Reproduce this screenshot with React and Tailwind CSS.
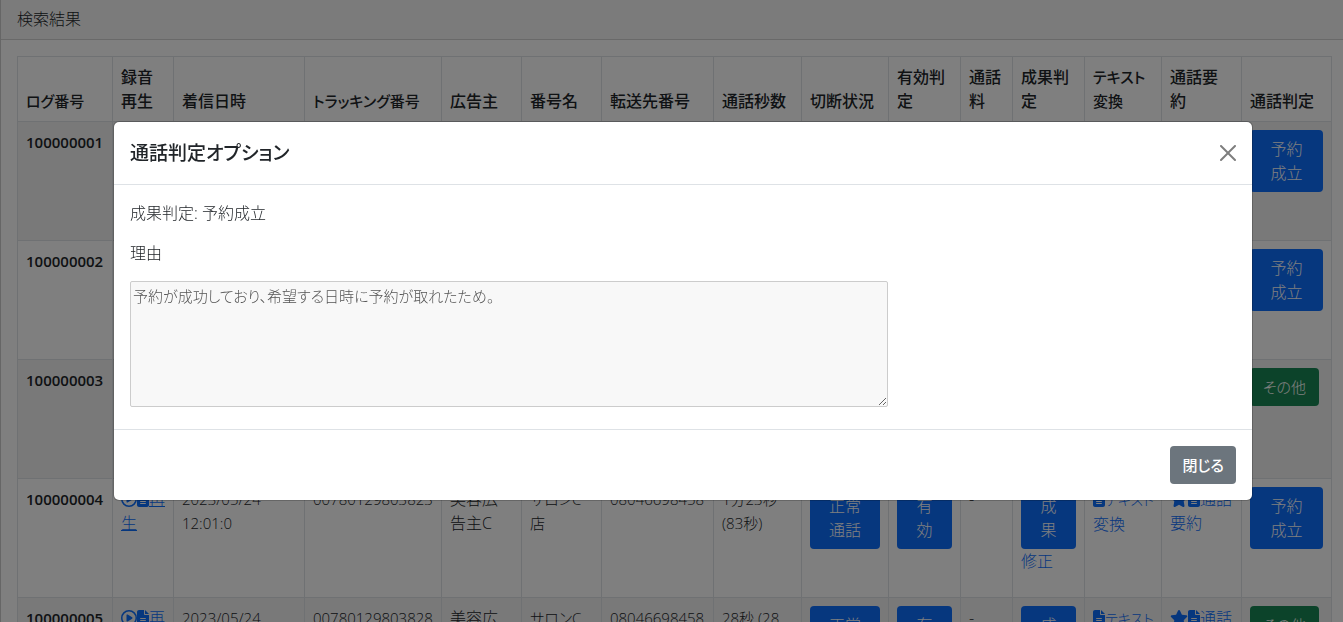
import React, { useState } from "react";
import { FaFileLines, FaRegCirclePlay, FaStar } from "react-icons/fa6";

const columns = [
  { label: "ログ番号", width: "w-[95px]", size: "text-[15px]" },
  { label: "録音再生", width: "w-[61px]" },
  { label: "着信日時", width: "w-[131px]" },
  { label: "トラッキング番号", width: "w-[137px]", size: "text-[15px]" },
  { label: "広告主", width: "w-[80px]" },
  { label: "番号名", width: "w-[80px]" },
  { label: "転送先番号", width: "w-[112px]" },
  { label: "通話秒数", width: "w-[88px]" },
  { label: "切断状況", width: "w-[87px]" },
  { label: "有効判定", width: "w-[72px]" },
  { label: "通話料", width: "w-[52px]" },
  { label: "成果判定", width: "w-[72px]" },
  { label: "テキスト変換", width: "w-[77px]", size: "text-[15px]" },
  { label: "通話要約", width: "w-[80px]" },
  { label: "通話判定", width: "w-[90px]" },
];

const calls = [
  {
    id: "100000001",
    calledAt: "2023/05/24 12:10:0",
    tracking: "00780129803821",
    advertiser: "美容広告主A",
    shop: "サロンA店",
    forwardTo: "08046698458",
    duration: "2分10秒 (130秒)",
    result: "予約成立",
  },
  {
    id: "100000002",
    calledAt: "2023/05/24 12:05:0",
    tracking: "00780129803822",
    advertiser: "美容広告主B",
    shop: "サロンB店",
    forwardTo: "08046698458",
    duration: "1分45秒 (105秒)",
    result: "予約成立",
  },
  {
    id: "100000003",
    calledAt: "2023/05/24 12:03:0",
    tracking: "00780129803828",
    advertiser: "美容広告主C",
    shop: "サロンC店",
    forwardTo: "08046698458",
    duration: "35秒 (35秒)",
    result: "その他",
  },
  {
    id: "100000004",
    calledAt: "2023/05/24 12:01:0",
    tracking: "00780129803823",
    advertiser: "美容広告主C",
    shop: "サロンC店",
    forwardTo: "08046698458",
    duration: "1分23秒 (83秒)",
    result: "予約成立",
  },
  {
    id: "100000005",
    calledAt: "2023/05/24 11:58:0",
    tracking: "00780129803828",
    advertiser: "美容広告主C",
    shop: "サロンC店",
    forwardTo: "08046698458",
    duration: "28秒 (28秒)",
    result: "その他",
  },
];

const Badge = ({
  children,
  color = "bg-[#0d6efd]",
  size = "text-base",
  onClick,
}) => (
  <button
    type="button"
    onClick={onClick}
    className={`${color} ${size} block rounded px-[13px] py-[7px] text-center leading-6 text-white`}
  >
    {children}
  </button>
);

const CallRow = ({ call, onOpen }) => {
  const cell = "border border-[#dee2e6] p-2 leading-6";
  const isOther = call.result === "その他";

  return (
    <tr className="h-[119px] align-top odd:bg-black/5">
      <th scope="row" className={`${cell} text-left text-[15px] font-semibold`}>
        {call.id}
      </th>
      <td className={cell}>
        <a href="#play" className="text-[#0d6efd] underline">
          <FaRegCirclePlay className="inline align-[-2px]" />
          <FaFileLines className="inline w-3 align-[-2px]" />
          再生
        </a>
      </td>
      <td className={`${cell} text-[15px]`}>{call.calledAt}</td>
      <td className={`${cell} text-[15px]`}>{call.tracking}</td>
      <td className={cell}>{call.advertiser}</td>
      <td className={`${cell} text-[15px]`}>{call.shop}</td>
      <td className={`${cell} text-[15px]`}>{call.forwardTo}</td>
      <td className={`${cell} text-[15px]`}>{call.duration}</td>
      <td className={cell}>
        <Badge>正常通話</Badge>
      </td>
      <td className={cell}>
        <Badge>有効</Badge>
      </td>
      <td className={cell}>-</td>
      <td className={cell}>
        <Badge>成果</Badge>
        <a href="#edit" className="text-[#0d6efd]">
          修正
        </a>
      </td>
      <td className={cell}>
        <a href="#text" className="text-[#0d6efd]">
          <span className="text-sm leading-6 whitespace-nowrap">
            <FaFileLines className="inline h-4 w-3 align-[-2px]" />
            テキスト
          </span>
          変換
        </a>
      </td>
      <td className={cell}>
        <a href="#summary" className="text-[#0d6efd]">
          <FaStar className="inline w-[18px] align-[-2px]" />
          <FaFileLines className="inline w-3 align-[-2px]" />
          通話要約
        </a>
      </td>
      <td className={cell}>
        <Badge
          color={isOther ? "bg-[#198754]" : "bg-[#0d6efd]"}
          size={isOther ? "text-[15px]" : "text-base"}
          onClick={onOpen}
        >
          {call.result}
        </Badge>
      </td>
    </tr>
  );
};

const OptionModal = ({ onClose }) => (
  <div className="fixed inset-0 flex items-center justify-center bg-black/50 pl-[23px]">
    <div
      role="dialog"
      aria-modal="true"
      aria-labelledby="modal-title"
      className="w-full max-w-[1140px] rounded-md border border-black/20 bg-white bg-clip-padding"
    >
      <div className="flex items-center justify-between border-b border-[#dee2e6] p-4">
        <h5 id="modal-title" className="text-[19px] leading-[30px] font-medium">
          通話判定オプション
        </h5>
        <button
          type="button"
          aria-label="閉じる"
          onClick={onClose}
          className="opacity-50"
        >
          <svg viewBox="0 0 16 16" className="size-4 fill-black">
            <path d="M.293.293a1 1 0 0 1 1.414 0L8 6.586 14.293.293a1 1 0 1 1 1.414 1.414L9.414 8l6.293 6.293a1 1 0 0 1-1.414 1.414L8 9.414l-6.293 6.293a1 1 0 0 1-1.414-1.414L6.586 8 .293 1.707a1 1 0 0 1 0-1.414z" />
          </svg>
        </button>
      </div>
      <div className="p-4">
        <p className="mb-4">成果判定: 予約成立</p>
        <label htmlFor="reason" className="mb-4 block">
          理由
        </label>
        <textarea
          id="reason"
          rows={5}
          disabled
          defaultValue="予約が成功しており、希望する日時に予約が取れたため。"
          className="mb-1.5 block w-[758px] max-w-full resize rounded-xs border border-[#cccccc] bg-[#f8f8f8] p-0.5 text-[15px] leading-6 text-[#545454]"
        />
      </div>
      <div className="flex justify-end border-t border-[#dee2e6] p-4">
        <button
          type="button"
          onClick={onClose}
          className="rounded bg-[#6c757d] px-3 py-[7px] text-[15px] leading-6 font-medium text-white"
        >
          閉じる
        </button>
      </div>
    </div>
  </div>
);

const App = () => {
  const [isOpen, setIsOpen] = useState(true);

  return (
    <div className="h-screen overflow-hidden bg-white font-['Open_Sans','Noto_Sans_CJK_JP',sans-serif] text-base font-light text-[#212529] [font-feature-settings:'palt']">
      <div className="border-l border-black/20">
        <div className="flex h-10 items-center border-b border-black/15 bg-black/3 px-4 pb-0.5">
          検索結果
        </div>
        <div className="py-4 pr-[11px] pl-4">
          <table className="w-full table-fixed border-collapse">
            <thead>
              <tr>
                {columns.map((column) => (
                  <th
                    key={column.label}
                    scope="col"
                    className={`${column.width} ${column.size || "text-base"} border border-[#dee2e6] p-2 text-left align-bottom leading-6 font-medium`}
                  >
                    {column.label}
                  </th>
                ))}
              </tr>
            </thead>
            <tbody>
              {calls.map((call) => (
                <CallRow
                  key={call.id}
                  call={call}
                  onOpen={() => setIsOpen(true)}
                />
              ))}
            </tbody>
          </table>
        </div>
      </div>

      {isOpen && <OptionModal onClose={() => setIsOpen(false)} />}
    </div>
  );
};

export default App;
